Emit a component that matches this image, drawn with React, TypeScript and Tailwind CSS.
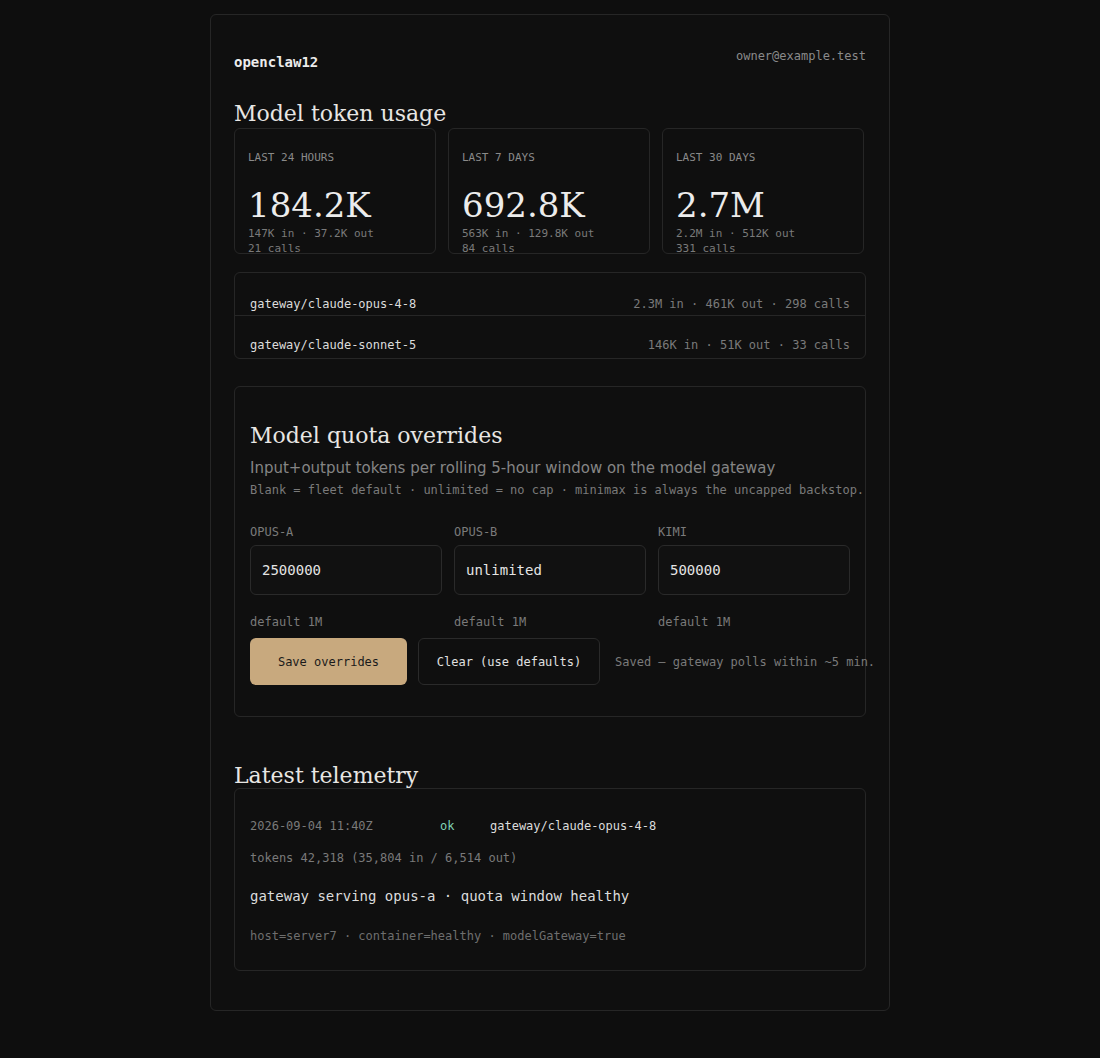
import React from 'react';

const mono = "font-['DejaVu_Sans_Mono',monospace]";
const serif = "font-['DejaVu_Serif',serif]";

const stats = [
  { label: 'Last 24 hours', value: '184.2K', io: '147K in · 37.2K out', calls: '21 calls' },
  { label: 'Last 7 days', value: '692.8K', io: '563K in · 129.8K out', calls: '84 calls' },
  { label: 'Last 30 days', value: '2.7M', io: '2.2M in · 512K out', calls: '331 calls' },
];

const models = [
  { name: 'gateway/claude-opus-4-8', detail: '2.3M in · 461K out · 298 calls' },
  { name: 'gateway/claude-sonnet-5', detail: '146K in · 51K out · 33 calls' },
];

const quotas = [
  { label: 'OPUS-A', value: '2500000' },
  { label: 'OPUS-B', value: 'unlimited' },
  { label: 'KIMI', value: '500000' },
];

export default function App() {
  return (
    <div className={`min-h-[1058px] bg-[#0e0e0e] pt-[14px] ${mono}`}>
      <div className="mx-auto w-[680px] rounded-md border border-[#262626] bg-[#0f0f0f] px-[23px] pt-[32px] pb-[39px]">
        {/* header */}
        <div className="flex items-start justify-between">
          <div className="pt-[6px] text-[14px] leading-[18px] font-bold text-[#ececec]">openclaw12</div>
          <div className="text-[12px] leading-[18px] text-[#8a8a8a]">owner@example.test</div>
        </div>

        <h2 className={`mt-[30px] text-[22px] leading-[26px] text-[#e8e6e3] ${serif}`}>Model token usage</h2>

        <div className="mt-[1px] grid w-[630px] grid-cols-3 gap-3">
          {stats.map((s) => (
            <div key={s.label} className="h-[126px] rounded-md border border-[#262626] px-[13px] pt-[21px]">
              <div className="text-[11px] leading-[16px] uppercase text-[#8a8a8a]">{s.label}</div>
              <div className={`mt-[21px] text-[34px] leading-[36px] text-[#ececec] ${serif}`}>{s.value}</div>
              <div className="mt-[3px] text-[11px] leading-[15px] text-[#7a7a7a]">
                <div>{s.io}</div>
                <div>{s.calls}</div>
              </div>
            </div>
          ))}
        </div>

        <div className="mt-[18px] rounded-md border border-[#262626]">
          {models.map((m, i) => (
            <div
              key={m.name}
              className={`flex justify-between px-[15px] text-[12px] leading-[18px] ${i > 0 ? 'border-t border-[#262626] pt-5 pb-1' : 'pt-[22px] pb-[2px]'}`}
            >
              <span className="text-[#dcdcdc]">{m.name}</span>
              <span className="text-[#7a7a7a]">{m.detail}</span>
            </div>
          ))}
        </div>

        <div className="mt-[27px] rounded-md border border-[#262626] px-[15px] pt-[36px] pb-[31px]">
          <h2 className={`text-[22px] leading-[26px] text-[#e8e6e3] ${serif}`}>Model quota overrides</h2>
          <p className="mt-[8px] font-['DejaVu_Sans',sans-serif] text-[15px] leading-[22px] text-[#858585]">
            Input+output tokens per rolling 5-hour window on the model gateway
          </p>
          <p className="mt-[2px] text-[12px] leading-[18px] whitespace-nowrap text-[#7a7a7a]">
            Blank = fleet default · unlimited = no cap · minimax is always the uncapped backstop.
          </p>

          <div className="mt-[24px] grid grid-cols-3 gap-3">
            {quotas.map((q) => (
              <div key={q.label}>
                <div className="text-[12px] leading-[18px] text-[#7a7a7a]">{q.label}</div>
                <div className="mt-[4px] flex h-[50px] items-center rounded-md border border-[#2a2a2a] bg-[#111111] px-[11px] text-[14px] text-[#e4e4e4]">
                  {q.value}
                </div>
                <div className="mt-[18px] text-[12px] leading-[18px] text-[#7a7a7a]">default 1M</div>
              </div>
            ))}
          </div>

          <div className="mt-[7px] flex items-center text-[12px]">
            <button className="flex h-[47px] w-[157px] shrink-0 items-center justify-center rounded-md bg-[#c8a97e] text-[#1a1a1a]">
              Save overrides
            </button>
            <button className="ml-[11px] flex h-[47px] w-[182px] shrink-0 items-center justify-center rounded-md border border-[#2a2a2a] bg-[#0f0f0f] text-[#e0e0e0]">
              Clear (use defaults)
            </button>
            <span className="ml-[15px] whitespace-nowrap text-[#7a7a7a]">Saved — gateway polls within ~5 min.</span>
          </div>
        </div>

        <h2 className={`mt-[46px] text-[22px] leading-[25px] text-[#e8e6e3] ${serif}`}>Latest telemetry</h2>
        <div className="rounded-md border border-[#262626] px-[15px] pt-[28px] pb-[25px]">
          <div className="flex text-[12px] leading-[18px]">
            <span className="w-[190px] text-[#7a7a7a]">2026-09-04 11:40Z</span>
            <span className="w-[50px] text-[#7fd1b4]">ok</span>
            <span className="text-[#dcdcdc]">gateway/claude-opus-4-8</span>
          </div>
          <div className="mt-[14px] text-[12px] leading-[18px] text-[#7a7a7a]">tokens 42,318 (35,804 in / 6,514 out)</div>
          <div className="mt-[18px] text-[14px] leading-[22px] text-[#dcdcdc]">gateway serving opus-a · quota window healthy</div>
          <div className="mt-[20px] text-[12px] leading-[18px] text-[#6e6e6e]">host=server7 · container=healthy · modelGateway=true</div>
        </div>
      </div>
    </div>
  );
}
